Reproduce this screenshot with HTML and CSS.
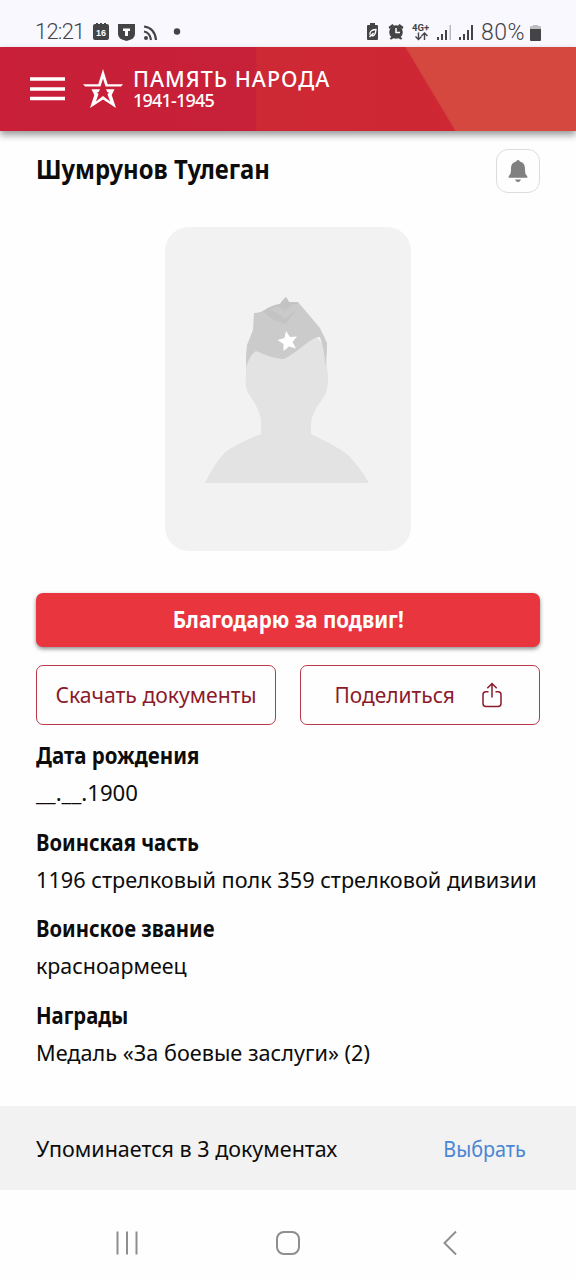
FILE: index.html
```html
<!DOCTYPE html>
<html lang="ru">
<head>
<meta charset="utf-8">
<title>Память народа</title>
<link rel="stylesheet" href="styles.css">
</head>
<body>
<div class="status">
  <span class="clock">12:21</span>
  <svg class="notices" width="94" height="20" viewBox="0 0 94 20">
    <g fill="#444447">
      <path d="M3 1h1V0h2v1h2V0h2v1h2V0h2v1h1q2 0 2 2v12q0 2-2 2H3q-2 0-2-2V3q0-2 2-2z"/>
      <path d="M26 1h17v9.500q0 4-4 6L34.500 18 30 16.500q-4-2-4-6z"/>
      <circle cx="54" cy="15" r="2"/>
      <circle cx="85" cy="8.500" r="3.200"/>
    </g>
    <path d="M52 8.500q6 1 7 8.500M52 3.500q11 1.500 12 13.500" fill="none" stroke="#444447" stroke-width="2.200"/>
    <path d="M31 5.500h7V8h-2v5h-3V8h-2z" fill="#fff"/>
    <text class="day" x="9" y="12.500">16</text>
  </svg>
  <svg class="signals" width="110" height="20" viewBox="0 0 110 20">
    <g fill="#444447">
      <path d="M3 2h2V0h5v2h2q1 0 1 1v13q0 1-1 1H3q-1 0-1-1V3q0-1 1-1z"/>
      <circle cx="31" cy="9" r="6.800"/>
      <path d="M24.500 6l-1-2 4-3 1.500 1.500zM37.500 6l1-2-4-3L33 2.500zM27 13l-2.500 3 2 .5 3-2zM35 13l2.500 3-2 .5-3-2z"/>
      <path d="M72 14h2v3h-2zM76 11h2v6h-2zM80 7h2v10h-2zM94 14h2v3h-2zM98 11h2v6h-2zM102 7h2v10h-2zM106 2h2v15h-2z"/>
    </g>
    <path d="M84.500 2h1.500v15h-1.500z" fill="#b8b8bd"/>
    <path d="M5 12q-1-5 6-5.500Q10.500 14 6 12.500M4.500 14l4-4" fill="none" stroke="#fff" stroke-width="1.300"/>
    <path d="M31 5v4.500h4" fill="none" stroke="#fff" stroke-width="1.500"/>
    <path d="M53.500 9.500v7m-3-3l3 3 3-3M59.500 17v-7m-3 3l3-3 3 3" fill="none" stroke="#444447" stroke-width="1.400"/>
    <text class="net" x="47" y="7.500">4G+</text>
  </svg>
  <span class="percent">80%</span>
  <svg class="battery" width="13" height="18" viewBox="0 0 13 18">
    <path d="M4 2V1h5v1h2q1 0 1 1v3H1V3q0-1 1-1z" fill="#bdbdc2"/>
    <path d="M1 5h11v11q0 1-1 1H2q-1 0-1-1z" fill="#444447"/>
  </svg>
</div>

<header class="header">
  <svg class="menu" width="36" height="26" viewBox="0 0 36 26"><path d="M0 3h35M0 13h35M0 22.500h35" stroke="#fff" stroke-width="3.600"/></svg>
  <svg class="logo" width="40" height="40" viewBox="0 0 40 40">
    <path d="M20 0l4.700 15.200H40L38 17.600H22.500L20 9.500l-2.500 8.100H2.200L0 15.200h15.300z" fill="#fff"/>
    <path d="M8.500 20.300h8.500l-1.500 2.900h-1.500l1.500 2-2.600 7.300L20 27l7.100 5.500-2.600-7.300 1.500-2h-1.500L23 20.300h8.500L28.700 26 33 39l-13-8.500L7 39l4.300-13z" fill="#fff"/>
  </svg>
  <div class="brand">
    <span class="brand-name">ПАМЯТЬ НАРОДА</span>
    <span class="brand-years">1941-1945</span>
  </div>
</header>

<main class="person">
  <div class="title-row">
    <h1 class="title">Шумрунов Тулеган</h1>
    <button class="bell">
      <svg width="22" height="24" viewBox="0 0 22 24"><path d="M11 1q1.600 0 1.900 1.600C16.500 3.500 18 6 18 10c0 4 .5 5.500 2.300 7v1.800H1.700V17C3.500 15.500 4 14 4 10c0-4 1.500-6.500 5.100-7.400Q9.400 1 11 1zM8 20.500h6Q13 23 11 23t-3-2.500z" fill="#808080"/></svg>
    </button>
  </div>

  <div class="photo">
    <svg width="246" height="323" viewBox="0 0 246 323">
      <path d="M81 125V150Q79 161 85 169Q95 183 96 194V207Q60 222 57 229Q50 236 40 256H204Q194 239 184 229Q177 222 146 207V197Q146 190 152 180Q162 166 162 162Q164 154 162 140L161 120 120 80z" fill="#e3e3e3"/>
      <path d="M89 86Q96 86 103 81Q111 78 115 77Q118 72 121 70L124 75H133L155 101Q158 107 162 116Q162 130 160 139Q160 124 155 110Q151 109 142 116Q127 128 119 132Q112 133 91 124Q85 128 81 140Q81 126 82 118Q86 108 88 103Z" fill="#cbcbcb"/>
      <path d="M98 84Q109 77 115 77L121 70 124 75H133L130 85 120 97 108 93z" fill="#c3c3c3"/>
      <path d="M113 79l7 5 8-7h5l-3 7-10 8-8-6-8-3z" fill="#cacaca"/>
      <path d="M121 104l4 6 7-.5-4.500 5.500 3.500 6.500-7-2-5.500 4.500v-7l-6-4 7-2z" fill="#fff"/>
    </svg>
  </div>

  <button class="thanks"><span class="fit fit-thanks">Благодарю за подвиг!</span></button>
  <div class="actions">
    <button class="action"><span class="fit fit-download">Скачать документы</span></button>
    <button class="action share"><span class="fit fit-share">Поделиться</span>
      <svg width="20" height="26" viewBox="0 0 20 26"><path d="M6.500 9.800H4Q1 9.800 1 12.800v8.700q0 3 3 3h12q3 0 3-3v-8.700q0-3-3-3h-2.500M10 15.500V2M5.300 6.300L10 1.500l4.700 4.800" fill="none" stroke="#8b1a2b" stroke-width="1.500"/></svg>
    </button>
  </div>

  <dl class="facts">
    <div class="fact birth"><dt>Дата рождения</dt><dd>__.__.1900</dd></div>
    <div class="fact unit"><dt>Воинская часть</dt><dd>1196 стрелковый полк 359 стрелковой дивизии</dd></div>
    <div class="fact rank"><dt>Воинское звание</dt><dd>красноармеец</dd></div>
    <div class="fact awards"><dt>Награды</dt><dd>Медаль «За боевые заслуги» (2)</dd></div>
  </dl>
</main>

<section class="mentions">
  <span class="mentions-text">Упоминается в 3 документах</span>
  <a class="choose">Выбрать</a>
</section>

<nav class="nav">
  <svg width="24" height="24" viewBox="0 0 24 24"><path d="M2.500 .5v23M12 .5v23M21.500 .5v23" stroke="#8e8e8e" stroke-width="2"/></svg>
  <svg width="24" height="24" viewBox="0 0 24 24"><rect x="1" y="1" width="22" height="22" rx="7" fill="none" stroke="#8e8e8e" stroke-width="2"/></svg>
  <svg width="24" height="24" viewBox="0 0 24 24"><path d="M19 .5L7.500 12 19 23.500" fill="none" stroke="#8e8e8e" stroke-width="2"/></svg>
</nav>
</body>
</html>
```
FILE: styles.css
```css
* { box-sizing: border-box; }
body {
  margin: 0;
  width: 576px;
  height: 1280px;
  overflow: hidden;
  display: flex;
  flex-direction: column;
  background: #fefefe;
  color: #0c0c0c;
  font-family: "Noto Sans", "Open Sans", sans-serif;
  font-size: 22.5px;
  white-space: nowrap;
}
svg { display: block; flex: none; }
button {
  font: inherit;
  padding: 0;
  margin: 0;
  border: 0;
  background: none;
  display: flex;
  align-items: center;
  justify-content: center;
}

.status {
  height: 47px;
  flex: none;
  padding: 18px 34px 0 35px;
  display: flex;
  align-items: center;
  background: #f9f8ff;
  color: #444447;
  font-family: Roboto, sans-serif;
}
.clock { width: 57px; margin-top: -2px; font-size: 22px; font-weight: 300; line-height: 30px; letter-spacing: -0.8px; }
.notices { margin-top: 1px; }
.signals { margin-left: auto; margin-top: 1px; }
.day { font: bold 9px "Liberation Sans", sans-serif; fill: #fff; text-anchor: middle; }
.net { font: bold 9.5px Roboto, sans-serif; fill: #444447; }
.percent { width: 48px; margin-left: 6px; font-size: 23px; font-weight: 300; line-height: 30px; letter-spacing: 0.5px; }

.header {
  height: 84px;
  flex: none;
  padding: 0 0 0 30px;
  display: flex;
  align-items: center;
  position: relative;
  color: #fff;
  background:
    linear-gradient(59.200deg, transparent 72.600%, #d4483f 72.900%),
    linear-gradient(90deg, #c91f38 0, #c72039 255px, #cd2935 257px, #cf2734 455px);
  box-shadow: 0 4px 7px rgba(0, 0, 0, .4);
}
.logo { margin-left: 17px; }
.brand { margin-left: 10px; display: flex; flex-direction: column; }
.brand-name { font-size: 21.500px; line-height: 22px; font-weight: 500; letter-spacing: 1px; }
.brand-years { font-size: 18px; line-height: 21px; font-weight: 500; letter-spacing: -0.800px; }

.person { padding: 18px 36px 0; height: 975px; flex: none; }
.title-row { display: flex; justify-content: space-between; }
.title { margin: 0; font-size: 26.5px; line-height: 40px; transform: scaleX(.9); transform-origin: left; }
.bell { width: 44px; height: 44px; border: 1.500px solid #dcdcdc; border-radius: 12px; }
.photo {
  width: 246px;
  height: 324px;
  margin: 34px auto 42px;
  border-radius: 24px;
  background: #f2f2f2;
}
.thanks {
  width: 504px;
  height: 54px;
  border-radius: 7px;
  background: #e8353e;
  color: #fff;
  font-weight: bold;
  box-shadow: 0 2px 4px rgba(0, 0, 0, .45);
}
.actions { display: flex; gap: 24px; margin-top: 18px; }
.action {
  width: 240px;
  height: 60px;
  border: 1px solid #b8384a;
  border-radius: 7px;
  color: #8b1a2b;
}
.share { gap: 23px; padding-right: 8px; }

/* Condensed text */
.fit { display: block; margin-top: -2px; }
.fit-thanks { transform: scaleX(.915); }
.fit-download { transform: scaleX(.94); }
.fit-share { transform: scaleX(.93); }

.facts { margin: 12px 0 0; display: flex; flex-direction: column; gap: 12.500px; }
.fact { height: 74px; line-height: 37px; }
.fact dt { width: max-content; font-weight: bold; transform: scaleX(.9); transform-origin: left; }
.fact dd { width: max-content; margin: 0; transform: scaleX(.963); transform-origin: left; }
.birth dt { transform: scaleX(.91); }
.birth dd { transform: scaleX(.985); }
.rank dd { transform: scaleX(.95); }

.mentions {
  height: 84px;
  flex: none;
  padding: 0 50px 0 36px;
  display: flex;
  align-items: center;
  justify-content: space-between;
  background: #f2f2f2;
}
.mentions-text { transform: scaleX(.955); transform-origin: left; }
.choose { color: #4a86d4; transform: scaleX(.88); transform-origin: right; }
.nav {
  height: 90px;
  padding: 15px 115px 0;
  display: flex;
  align-items: center;
  justify-content: space-between;
}
```
